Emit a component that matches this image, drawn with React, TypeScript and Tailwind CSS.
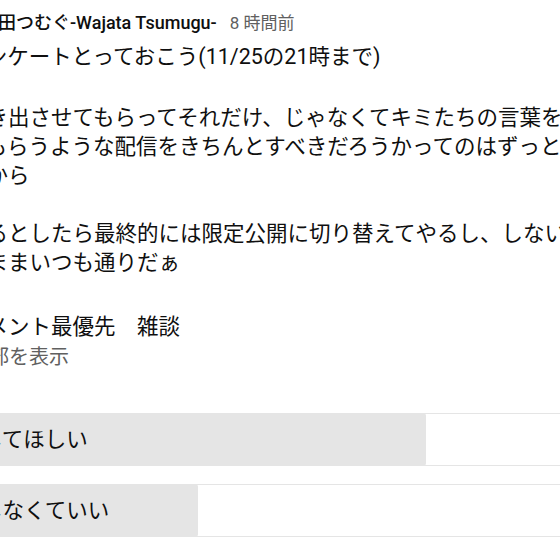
import React from "react";

const font = { fontFamily: "Roboto, 'Noto Sans CJK JP', sans-serif" };

function PollOption({ text, fill }: { text: string; fill: string }) {
  return (
    <div className="relative flex h-[53px] w-[700px] items-center rounded-[4px] border border-[#e5e5e5] bg-white">
      <div className={`absolute inset-y-[-1px] left-[-1px] rounded-r-[3px] bg-[#e5e5e5] ${fill}`} />
      <span className="relative pl-[20px] text-[21.5px] leading-[29px] text-[#0f0f0f] whitespace-nowrap">{text}</span>
    </div>
  );
}

export default function App() {
  const lines: (string | null)[] = [
    "アンケートとっておこう(11/25の21時まで)",
    null,
    "引き出させてもらってそれだけ、じゃなくてキミたちの言葉を聞かせて",
    "てもらうような配信をきちんとすべきだろうかってのはずっと思ってた",
    "だから",
    null,
    "やるとしたら最終的には限定公開に切り替えてやるし、しないならその",
    "のままいつも通りだぁ",
    null,
  ];
  return (
    <div className="h-[560px] w-[560px] overflow-hidden bg-white" style={font}>
      <div className="ml-[-35px] w-[760px]">
        <div className="ml-[15px] flex items-baseline gap-[13px] pt-[10px] whitespace-nowrap">
          <span className="text-[18px] leading-[26px] font-medium text-[#0f0f0f]">侘田つむぐ-Wajata Tsumugu-</span>
          <span className="text-[17px] leading-[26px] text-[#606060]">8 時間前</span>
        </div>
        <div className="mt-[6px] text-[21.5px] leading-[29px] text-[#0f0f0f]">
          {lines.map((l, i) =>
            l === null ? (
              <div key={i} className={i === 1 ? "h-[32px]" : "h-[29px]"} />
            ) : (
              <div key={i} className="whitespace-nowrap">{l}</div>
            )
          )}
          <div className="mt-[6px] whitespace-nowrap">コメント最優先　雑談</div>
          <div className="ml-[4px] mt-[2px] whitespace-nowrap text-[20px] text-[#606060]">一部を表示</div>
        </div>
      </div>
      <div className="ml-[-40px] mt-[41px] flex flex-col gap-[18px]">
        <PollOption text="してほしい" fill="w-[466px]" />
        <PollOption text="しなくていい" fill="w-[238px]" />
      </div>
    </div>
  );
}
